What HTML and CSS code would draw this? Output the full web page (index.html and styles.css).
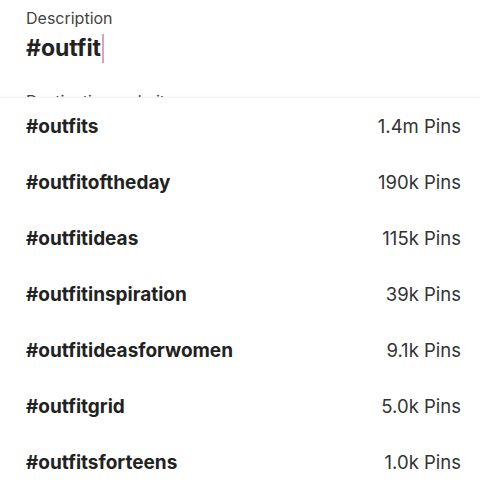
FILE: index.html
```html
<!DOCTYPE html>
<html lang="en">
<head>
  <meta charset="UTF-8" />
  <title>Pin description</title>
  <link rel="stylesheet" href="styles.css">
</head>
<body>

<div class="editor">
  <div class="field">
    <div class="field-label">Description</div>
    <div class="field-value">#outfit<span class="caret"></span></div>
  </div>
  <div class="field">
    <div class="field-label">Destination website</div>
  </div>

  <!-- hashtag suggestions, drawn over the form -->
  <ul class="suggestions">
    <li class="tag-row"><span class="tag">#outfits</span><span class="count">1.4m Pins</span></li>
    <li class="tag-row"><span class="tag">#outfitoftheday</span><span class="count">190k Pins</span></li>
    <li class="tag-row"><span class="tag">#outfitideas</span><span class="count">115k Pins</span></li>
    <li class="tag-row"><span class="tag">#outfitinspiration</span><span class="count">39k Pins</span></li>
    <li class="tag-row"><span class="tag">#outfitideasforwomen</span><span class="count">9.1k Pins</span></li>
    <li class="tag-row"><span class="tag">#outfitgrid</span><span class="count">5.0k Pins</span></li>
    <li class="tag-row"><span class="tag">#outfitsforteens</span><span class="count">1.0k Pins</span></li>
  </ul>
</div>

</body>
</html>
```

FILE: styles.css
```css
body {
  margin: 0;
  font-family: Inter, "Noto Sans", sans-serif;
  background: #fff;
  color: #222;
}
.editor {
  position: relative;
  height: 500px;
  overflow: hidden;
}
.field {
  padding: 8px 26px 0;
}
.field-label {
  font-size: 16px;
  color: #444;
  line-height: 20px;
}
.field-value {
  font-size: 23px;
  font-weight: 700;
  color: #222;
  line-height: 30px;
  margin-top: 5px;
  display: flex;
  align-items: center;
}
.caret {
  display: inline-block;
  width: 2px;
  height: 29px;
  background: #dba3b4;
  margin-left: 1px;
}
.field + .field {
  margin-top: 20px;
}
/* dropdown sits on top of the rest of the form */
.suggestions {
  position: absolute;
  top: 97px;
  left: 0;
  right: 0;
  margin: 0;
  padding: 0;
  list-style: none;
  background: #fff;
  border-top: 1px solid #f3f3f3;
  box-shadow: 0 -1px 2px rgba(0, 0, 0, 0.03);
}
.tag-row {
  display: flex;
  justify-content: space-between;
  align-items: center;
  height: 56px;
  padding: 0 19px 0 26px;
}
.tag {
  font-size: 19px;
  font-weight: 700;
  color: #222;
}
.count {
  font-size: 18.5px;
  color: #333;
}
```
